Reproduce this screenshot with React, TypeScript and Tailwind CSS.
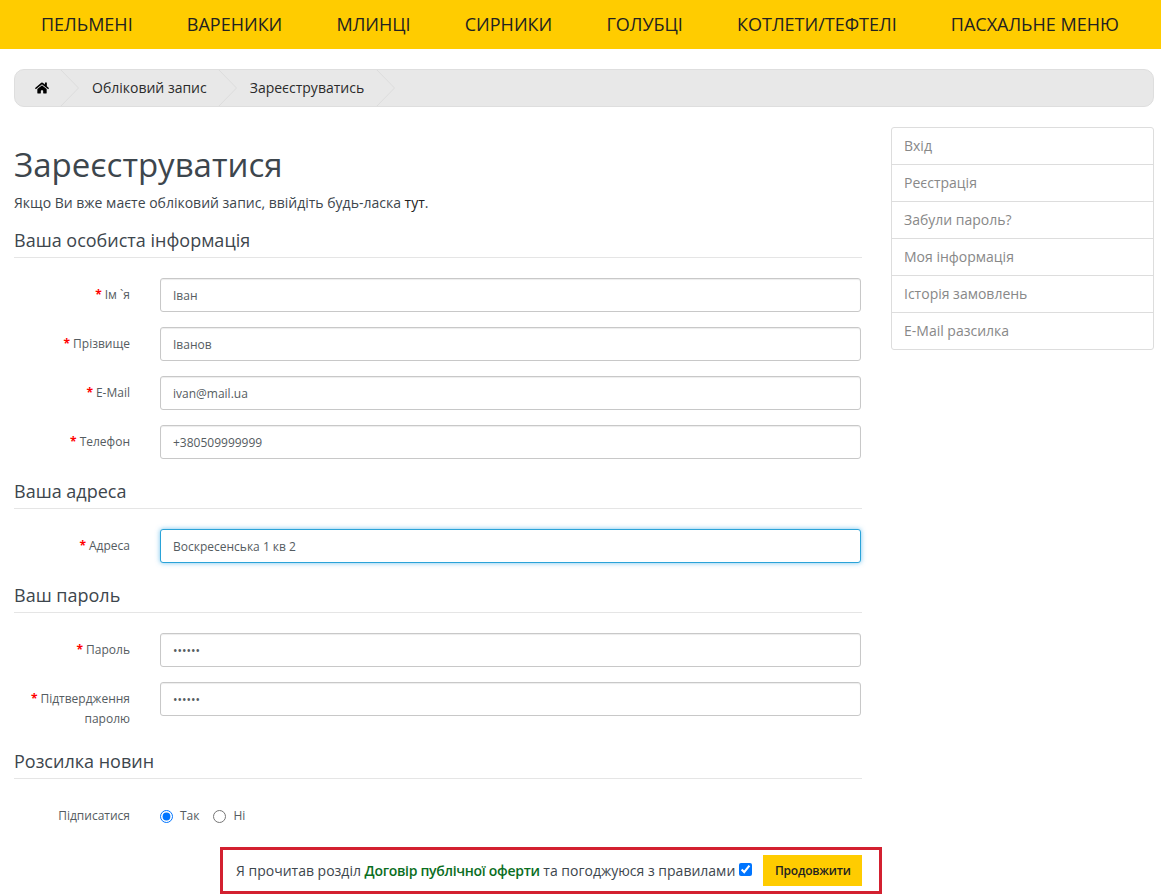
import React from "react";
import { FaHome } from "react-icons/fa";

const navItems = ["ПЕЛЬМЕНІ", "ВАРЕНИКИ", "МЛИНЦІ", "СИРНИКИ", "ГОЛУБЦІ", "КОТЛЕТИ/ТЕФТЕЛІ", "ПАСХАЛЬНЕ МЕНЮ"];
const sideLinks = ["Вхід", "Реєстрація", "Забули пароль?", "Моя інформація", "Історія замовлень", "E-Mail разсилка"];

const Chevron = () => (
  <svg width="20" height="38" viewBox="0 0 20 38" className="shrink-0">
    <path d="M0 0 L18.5 19 L0 38" fill="none" stroke="#dcdcdc" strokeWidth="1" />
  </svg>
);

const Legend = ({ children }: { children: React.ReactNode }) => (
  <div className="h-[35px] border-b border-[#e5e5e5] pt-[4px] text-[18px] leading-[26px] text-[#3d464d]">
    {children}
  </div>
);

const Field = ({
  label,
  value,
  focused,
  secure,
}: {
  label: string[];
  value: string;
  focused?: boolean;
  secure?: boolean;
}) => (
  <div className="mb-[15px] flex w-[847px]">
    <label className="w-[116px] shrink-0 pt-[7px] text-right text-[12px] leading-[20px] text-[#555c61]">
      <span className="mr-[3px] font-bold text-[#ff0000]">*</span>
      {label[0]}
      {label[1] && <span className="block">{label[1]}</span>}
    </label>
    <input
      type={secure ? "password" : "text"}
      defaultValue={value}
      className={`ml-[30px] h-[34px] w-[701px] rounded-[3px] border bg-white px-[12px] text-[12px] text-[#555c61] outline-none ${
        focused ? "border-[#2aa3d8] shadow-[0_0_5px_rgba(60,170,230,0.7)]" : "border-[#c8c8c8] shadow-[inset_0_1px_1px_rgba(0,0,0,0.075)]"
      }`}
    />
  </div>
);

export default function App() {
  return (
    <div className="h-[896px] overflow-hidden bg-white font-['Open_Sans',sans-serif] text-[14px] text-[#3d464d]">
      <nav className="flex h-[49px] items-center gap-[54.2px] bg-[#ffcc00] pl-[41px] text-[18px] text-[#222]">
        {navItems.map((item) => (
          <a key={item} className="whitespace-nowrap">
            {item}
          </a>
        ))}
      </nav>

      <div className="ml-[14px] mt-[20px] flex h-[38px] w-[1140px] items-center overflow-hidden rounded-[10px] border border-[#dedede] bg-[#e8e8e8] text-[14px] text-[#2b2b2b]">
        <FaHome className="ml-[20px] mr-[11px] shrink-0 text-[14px] text-black" />
        <Chevron />
        <span className="-mt-[2px] ml-[12px] mr-[11px]">Обліковий запис</span>
        <Chevron />
        <span className="-mt-[2px] ml-[12px] mr-[12px]">Зареєструватись</span>
        <Chevron />
      </div>

      <div className="ml-[14px] flex w-[1140px] justify-between">
        <main className="w-[848px]">
          <h1 className="mt-[38px] text-[33px] leading-[40px] text-[#3d464d]">Зареєструватися</h1>
          <p className="mb-[10px] mt-[8px] leading-[20px]">
            Якщо Ви вже маєте обліковий запис, ввійдіть будь-ласка <a className="text-[#222]">тут</a>.
          </p>

          <section>
            <Legend>Ваша особиста інформація</Legend>
            <div className="mt-[20px]">
              <Field label={["Ім `я"]} value="Іван" />
              <Field label={["Прізвище"]} value="Іванов" />
              <Field label={["E-Mail"]} value="ivan@mail.ua" />
              <Field label={["Телефон"]} value="+380509999999" />
            </div>
          </section>

          <section>
            <Legend>Ваша адреса</Legend>
            <div className="mt-[20px]">
              <Field label={["Адреса"]} value="Воскресенська 1 кв 2" focused />
            </div>
          </section>

          <section>
            <Legend>Ваш пароль</Legend>
            <div className="mt-[20px]">
              <Field label={["Пароль"]} value="123456" secure />
              <Field label={["Підтвердження", "паролю"]} value="123456" secure />
            </div>
          </section>

          <section>
            <Legend>Розсилка новин</Legend>
            <div className="mt-[27px] flex h-[20px] items-center text-[12px] text-[#555c61]">
              <span className="w-[116px] text-right">Підписатися</span>
              <label className="ml-[30px] flex items-center">
                <input type="radio" name="news" defaultChecked className="m-0 h-[13px] w-[13px] accent-[#0075ff]" />
                <span className="ml-[7px]">Так</span>
              </label>
              <label className="ml-[14px] flex items-center">
                <input type="radio" name="news" className="m-0 h-[13px] w-[13px]" />
                <span className="ml-[7px]">Ні</span>
              </label>
            </div>
          </section>
        </main>

        <aside className="mt-[20px] h-[223px] w-[263px] overflow-hidden rounded-[3px] border border-[#dddddd] text-[14px] text-[#888888]">
          {sideLinks.map((link) => (
            <a key={link} className="flex h-[37px] items-center border-b border-[#dddddd] pb-[2px] pl-[12px] last:h-[36px] last:border-b-0">
              {link}
            </a>
          ))}
        </aside>
      </div>

      <div className="ml-[220px] mt-[21px] flex h-[47px] w-[662px] items-center border-[3px] border-[#d32030] pl-[13px] text-[14px] text-[#3d464d]">
        <span className="whitespace-nowrap">
          Я прочитав розділ <a className="font-semibold tracking-[-0.3px] text-[#0a6e1e]">Договір публічної оферти</a> та погоджуюся з правилами
        </span>
        <input type="checkbox" defaultChecked className="mb-[3px] ml-[4px] h-[13px] w-[13px] accent-[#0075ff]" />
        <button className="ml-[11px] h-[31px] w-[99px] bg-[#ffcc00] text-[12px] font-semibold tracking-[-0.2px] text-[#222]">Продовжити</button>
      </div>
    </div>
  );
}
